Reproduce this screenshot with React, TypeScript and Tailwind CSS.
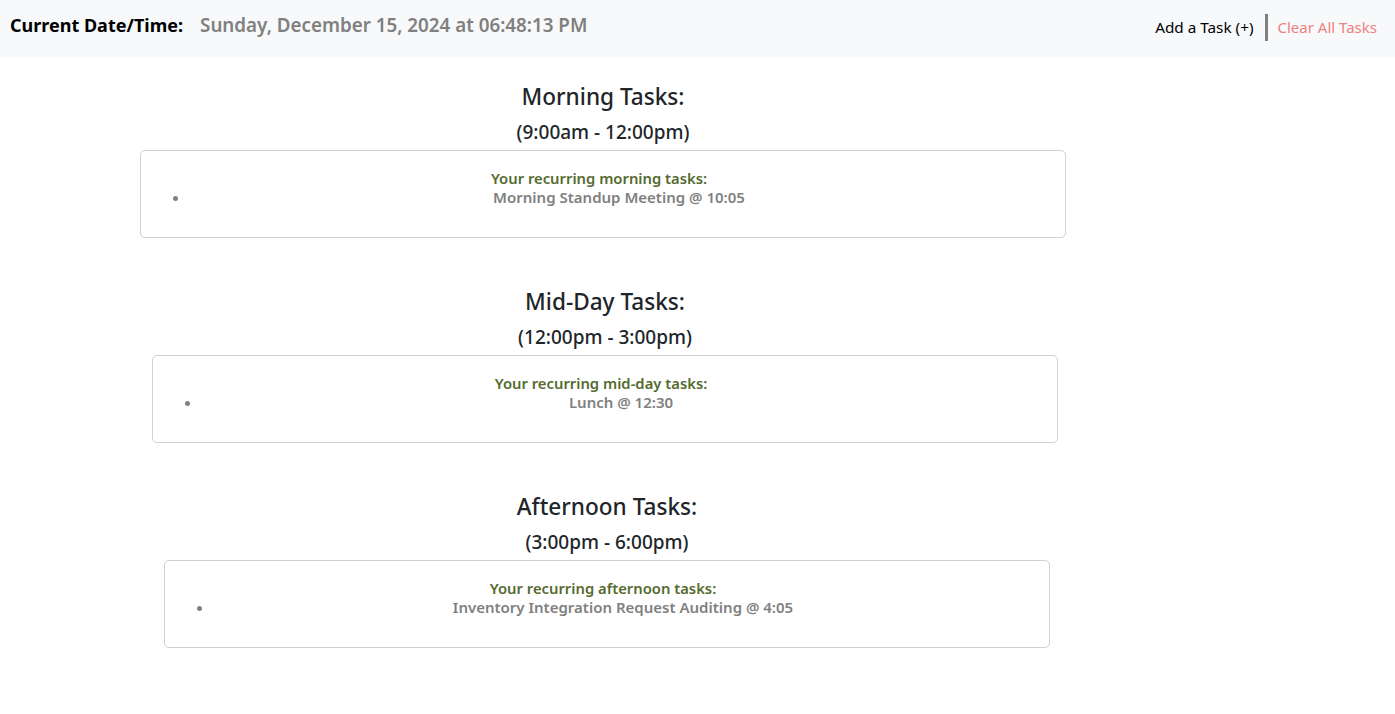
const sections = [
  {
    title: 'Morning Tasks:',
    range: '(9:00am - 12:00pm)',
    label: 'Your recurring morning tasks:',
    item: 'Morning Standup Meeting @ 10:05',
    box: 'ml-[140px] w-[926px]',
  },
  {
    title: 'Mid-Day Tasks:',
    range: '(12:00pm - 3:00pm)',
    label: 'Your recurring mid-day tasks:',
    item: 'Lunch @ 12:30',
    box: 'ml-[152px] w-[906px]',
  },
  {
    title: 'Afternoon Tasks:',
    range: '(3:00pm - 6:00pm)',
    label: 'Your recurring afternoon tasks:',
    item: 'Inventory Integration Request Auditing @ 4:05',
    box: 'ml-[164px] w-[886px]',
  },
]

export default function App() {
  return (
    <main className="min-h-screen bg-white font-['Noto_Sans',sans-serif] text-[#212529]">
      {/* Header */}
      <nav className="h-[57px] bg-[#f8f9fa] flex items-start justify-between pl-[10px] pr-[18px]">
        <div className="flex items-center h-[50px]">
          <span className="text-[18px] font-bold text-black">Current Date/Time:</span>
          <span className="ml-[17px] text-[18.8px] font-semibold text-[#808080]">
            Sunday, December 15, 2024 at 06:48:13 PM
          </span>
        </div>
        <div className="flex items-center h-[55px] text-[15.3px]">
          <span className="text-black">Add a Task (+)</span>
          <span className="ml-[11px] mr-[10px] w-[3px] h-[27px] bg-[#808080]" />
          <span className="text-[15px] text-[#f08080]">Clear All Tasks</span>
        </div>
      </nav>

      {/* Sections */}
      <div className="pt-[22px]">
        {sections.map((s) => (
          <section key={s.title} className={`${s.box} mb-[46px]`}>
            <h2 className="text-center text-[22.6px] font-medium leading-[36px]">{s.title}</h2>
            <h3 className="text-center text-[19px] font-medium leading-[32px] mt-[1px]">{s.range}</h3>
            <div className="mt-[2px] border border-[#d0d0d0] rounded-[5px] h-[88px] pt-[18px] pr-[8px]">
              <p className="text-center text-[14.8px] font-semibold text-[#556b2f] leading-[19px]">
                {s.label}
              </p>
              <ul className="pl-[40px]">
                <li className="relative text-center text-[15px] font-semibold text-[#808080] leading-[19px]">
                  <span className="absolute left-[-8px] top-[8px] w-[5px] h-[5px] rounded-full bg-[#808080]" />
                  {s.item}
                </li>
              </ul>
            </div>
          </section>
        ))}
      </div>
    </main>
  )
}
